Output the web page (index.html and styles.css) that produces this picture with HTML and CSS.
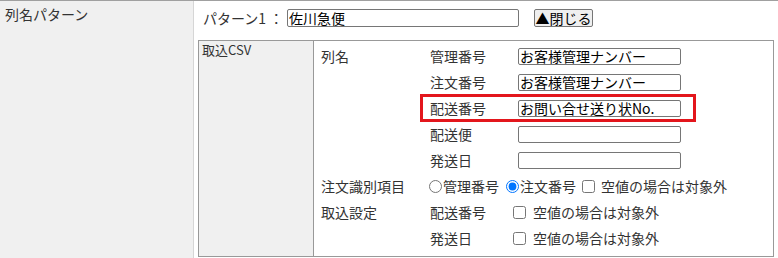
FILE: index.html
```html
<!DOCTYPE html>
<html lang="ja">
<head>
  <meta charset="UTF-8">
  <title>列名パターン</title>
  <link rel="stylesheet" href="styles.css">
</head>
<body>
  <div class="pattern-row">
    <div class="pattern-side">列名パターン</div>

    <div class="pattern-main">
      <div class="pattern-head">
        <span class="pattern-title">パターン1 ：</span>
        <input type="text" class="text-input wide" value="佐川急便">
        <button type="button" class="close-button">▲閉じる</button>
      </div>

      <div class="csv-box">
        <div class="csv-side">取込CSV</div>

        <div class="csv-main">
          <div class="group">
            <div class="group-label">列名</div>
            <div class="group-body">
              <div class="field-row">
                <span class="field-name">管理番号</span>
                <input type="text" class="text-input short" value="お客様管理ナンバー">
              </div>
              <div class="field-row">
                <span class="field-name">注文番号</span>
                <input type="text" class="text-input short" value="お客様管理ナンバー">
              </div>
              <div class="field-row marked">
                <span class="field-name">配送番号</span>
                <input type="text" class="text-input short" value="お問い合せ送り状No.">
              </div>
              <div class="field-row">
                <span class="field-name">配送便</span>
                <input type="text" class="text-input short" value="">
              </div>
              <div class="field-row">
                <span class="field-name">発送日</span>
                <input type="text" class="text-input short" value="">
              </div>
            </div>
          </div>

          <div class="group">
            <div class="group-label">注文識別項目</div>
            <div class="group-body">
              <div class="field-row">
                <label class="choice"><input type="radio" name="order-key" class="radio first">管理番号</label>
                <label class="choice"><input type="radio" name="order-key" class="radio" checked>注文番号</label>
                <label class="choice"><input type="checkbox" class="check">空値の場合は対象外</label>
              </div>
            </div>
          </div>

          <div class="group">
            <div class="group-label">取込設定</div>
            <div class="group-body">
              <div class="field-row">
                <span class="field-name narrow">配送番号</span>
                <label class="choice"><input type="checkbox" class="check lead">空値の場合は対象外</label>
              </div>
              <div class="field-row">
                <span class="field-name narrow">発送日</span>
                <label class="choice"><input type="checkbox" class="check lead">空値の場合は対象外</label>
              </div>
            </div>
          </div>
        </div>
      </div>
    </div>
  </div>
</body>
</html>
```

FILE: styles.css
```css
:root {
  --side-bg: #f0f0f0;
  --line: #a0a0a0;
  --box-line: #999999;
  --text: #222222;
  --input-line: #767676;
  --mark: #e3161c;
}

* {
  box-sizing: border-box;
}

body {
  margin: 0;
  font-family: "Noto Sans CJK JP", "Noto Sans", sans-serif;
  font-size: 14px;
  color: var(--text);
  background: #ffffff;
  width: 778px;
  height: 258px;
  overflow: hidden;
}

.pattern-row {
  display: flex;
  border-top: 1px solid var(--line);
  height: 258px;
}

.pattern-side {
  width: 194px;
  flex: none;
  background: var(--side-bg);
  border-right: 1px solid #d6d6d6;
  padding: 4px 0 0 5px;
  line-height: 18px;
  color: #333333;
}

.pattern-main {
  flex: 1;
  padding: 8px 0 0 4px;
}

.pattern-head {
  display: flex;
  align-items: center;
  height: 18px;
  padding-left: 5px;
}

.pattern-title {
  width: 84px;
  line-height: 18px;
  color: #333333;
}

.text-input {
  font-family: inherit;
  font-size: 14px;
  color: #000000;
  border: 1px solid var(--input-line);
  border-radius: 2px;
  padding: 0 1px;
  margin: 0;
  background: #ffffff;
  line-height: 15px;
}

.text-input.wide {
  width: 232px;
  height: 18px;
}

.text-input.short {
  width: 163px;
  height: 17px;
}

.close-button {
  margin-left: 15px;
  width: 59px;
  height: 18px;
  padding: 0;
  font-family: inherit;
  font-size: 14px;
  line-height: 15px;
  color: #000000;
  background: #efefef;
  border: 1px solid var(--input-line);
  border-radius: 2px;
}

.csv-box {
  display: flex;
  margin-top: 13px;
  width: 576px;
  height: 217px;
  border: 1px solid var(--box-line);
}

.csv-side {
  width: 115px;
  flex: none;
  background: var(--side-bg);
  border-right: 1px solid var(--box-line);
  padding: 1px 3px;
  font-size: 13px;
  line-height: 16px;
  color: #333333;
}

.csv-main {
  flex: 1;
  padding: 2px 0 0 7px;
}

.group {
  display: grid;
  grid-template-columns: 109px 1fr;
}

.group-label {
  line-height: 26px;
  color: #333333;
}

.field-row {
  display: flex;
  align-items: center;
  height: 26px;
  white-space: nowrap;
  color: #333333;
}

.field-row.marked {
  margin-left: -9px;
  padding-left: 9px;
  width: 274px;
  outline: 3px solid var(--mark);
  outline-offset: -2px;
}

.field-name {
  width: 88px;
  flex: none;
}

.field-name.narrow {
  width: 83px;
}

.choice {
  display: flex;
  align-items: center;
}

.radio {
  width: 13px;
  height: 13px;
  margin: 0 1px 0 7px;
}

.radio.first {
  margin-left: -1px;
}

.check {
  width: 13px;
  height: 13px;
  margin: 0 6px 0 6px;
}

.check.lead {
  margin: 0 7px 0 0;
}
```
